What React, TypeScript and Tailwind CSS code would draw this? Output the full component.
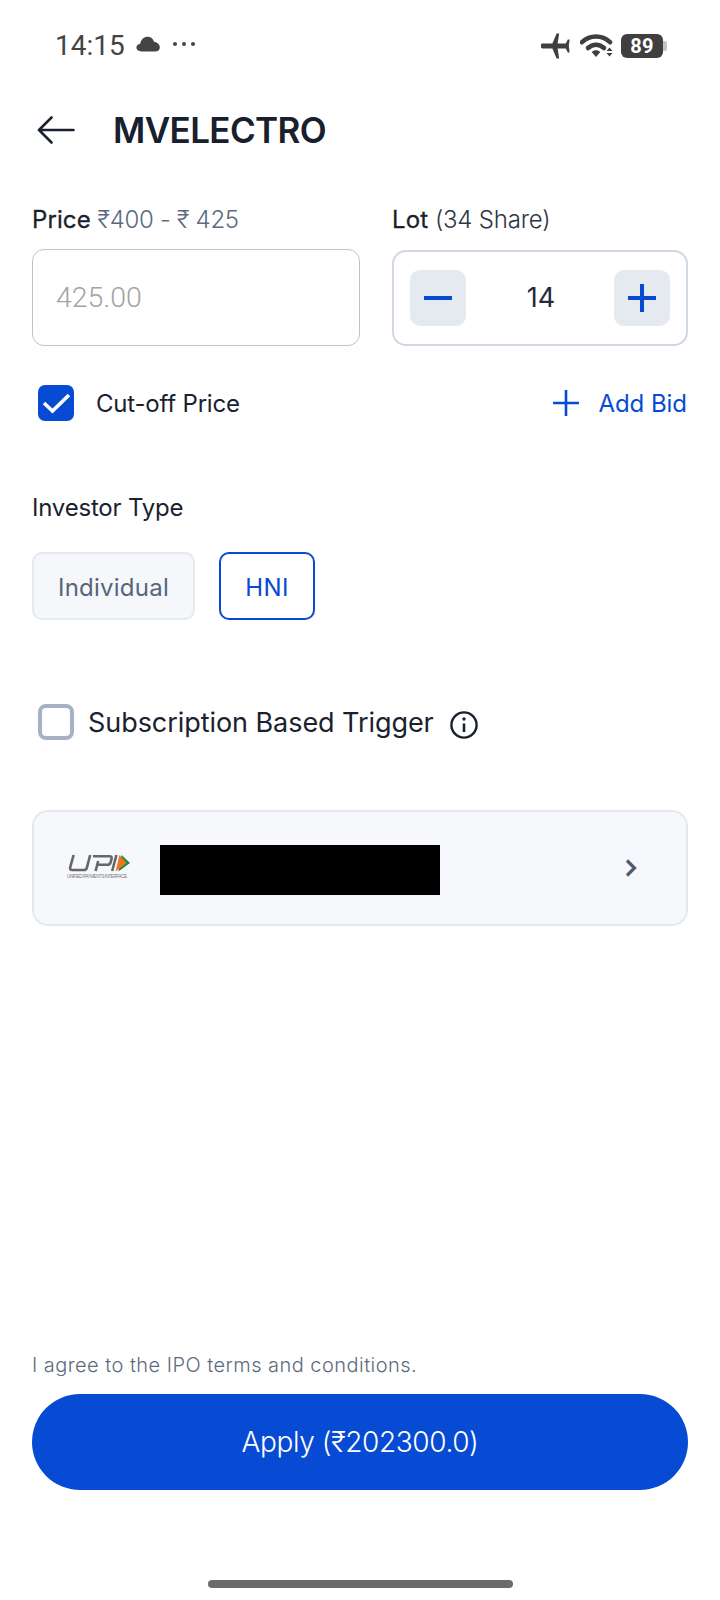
import React from "react";

const BLUE = "#074bd4";

function Plane() {
  return (
    <svg width="30" height="26" viewBox="0 0 30 26" fill="#3f3f3f">
      <path d="M0 12 C0 11 .8 10.6 1.6 10.6 L11.4 10.6 L15.6 .6 L18.2 .6 L16.6 10.6 L24.8 10.6 L26.8 6.6 L28.6 6.6 L27.8 13 L28.6 19.4 L26.8 19.4 L24.8 15.4 L16.6 15.4 L18.2 25.4 L15.6 25.4 L11.4 15.4 L1.6 15.4 C.8 15.4 0 15 0 14 Z" />
    </svg>
  );
}

function Wifi() {
  return (
    <svg width="34" height="25" viewBox="0 0 34 25" fill="none">
      <path d="M2 9.2 C10 1.6 22 1.6 30 9.2" stroke="#3f3f3f" strokeWidth="4.6" strokeLinecap="round" />
      <path d="M8 15 C12.6 10.7 19.4 10.7 24 15" stroke="#3f3f3f" strokeWidth="4.6" strokeLinecap="round" />
      <path d="M11.6 19 C14.4 16.7 17.6 16.7 20.4 19 L16 24 Z" fill="#3f3f3f" />
      <path d="M26.5 18 L29.5 14.6 L32.5 18 Z M26.5 20 L32.5 20 L29.5 23.6 Z" fill="#3f3f3f" />
    </svg>
  );
}

function Upi() {
  return (
    <svg width="64" height="25" viewBox="0 0 64 25" className="-mt-[4px] shrink-0">
      <g fill="none" stroke="#66676a" strokeWidth="2.6">
        <path d="M6.6 1 L3.2 13.4 Q2.5 16 5.2 16 H16.8 Q19.2 16 19.8 13.8 L23.2 1" />
        <path d="M26 2.3 H42.4 Q45.2 2.3 44.6 4.6 L43.6 8.4 Q43 10.8 40.4 10.8 H30.2 M31.2 7 L28.6 17" />
        <path d="M49.4 1 L45.2 17" />
      </g>
      <path d="M54.6 1 L63 9 L51.4 17.4 Z" fill="#1f8a45" />
      <path d="M52.4 1 L59.6 9 L48.6 17.4 Z" fill="#ee7623" />
      <text x="0" y="24" fontSize="4.6" fill="#77787b" fontFamily="'Liberation Sans', sans-serif" textLength="60">
        UNIFIED PAYMENTS INTERFACE
      </text>
    </svg>
  );
}

export default function App() {
  return (
    <div className="relative flex h-[1600px] w-[720px] flex-col overflow-hidden bg-white font-['Inter',sans-serif] text-[#1a2230]">
      {/* status bar */}
      <div className="mt-[33px] flex h-[25px] items-center justify-between pl-[55px] pr-[53px]">
        <div className="flex items-center">
          <span className="font-['Roboto',sans-serif] text-[28px] leading-none text-[#444444]">14:15</span>
          <svg width="24" height="16" viewBox="0 0 24 16" className="ml-[11px] -mt-[3px]" fill="#444444">
            <path d="M5.5 15.5 C2.4 15.5 .4 13.8 .4 11.6 C.4 9.6 2 8 4.2 7.8 C5 3.4 8.2 .8 11.6 .8 C14.6 .8 17 2.6 18 5.8 C21.4 6.2 23.8 8.6 23.8 11.4 C23.8 13.8 21.8 15.5 19 15.5 Z" />
          </svg>
          <span className="ml-[13px] -mt-[3px] flex gap-[5px]">
            <span className="h-[4px] w-[4px] rounded-full bg-[#444444]" />
            <span className="h-[4px] w-[4px] rounded-full bg-[#444444]" />
            <span className="h-[4px] w-[4px] rounded-full bg-[#444444]" />
          </span>
        </div>
        <div className="flex items-center">
          <Plane />
          <span className="ml-[9px]"><Wifi /></span>
          <span className="ml-[7px] flex items-center">
            <span className="flex h-[24px] w-[42px] items-center justify-center rounded-[6px] bg-[#3f3f3f] font-['Roboto',sans-serif] text-[20px] font-bold leading-none tracking-[0.3px] text-white">89</span>
            <span className="h-[10px] w-[4px] rounded-r-[2px] bg-[#c4c4c4]" />
          </span>
        </div>
      </div>

      {/* header */}
      <div className="mt-[46px] flex h-[52px] items-center pl-[37px]">
        <svg width="38" height="28" viewBox="0 0 38 28" fill="none" stroke="#1a2230" strokeWidth="2.6" strokeLinecap="round" strokeLinejoin="round">
          <path d="M36.5 14 H2 M14.5 1.5 L2 14 L14.5 26.5" />
        </svg>
        <h1 className="ml-[38px] text-[35px] font-semibold leading-none tracking-[-0.6px] text-[#17202c]">MVELECTRO</h1>
      </div>

      {/* price / lot */}
      <div className="mt-[48px] flex gap-[32px] px-[32px]">
        <div className="w-[328px]">
          <div className="text-[24px] leading-[32px] text-[#1a2230]">
            <span className="font-normal tracking-[0.1px] [-webkit-text-stroke:0.3px_#1a2230]">Price</span>{" "}
            <span className="font-light tracking-[-0.3px] text-[#5a6b7f]">₹400 - ₹ 425</span>
          </div>
          <div className="mt-[13px] flex h-[97px] items-center rounded-[12px] border-[1.5px] border-[#c2c2c2] pl-[23px] pt-[1px] font-['Roboto',sans-serif] text-[28.5px] font-light text-[#a3a3a3]">
            425.00
          </div>
        </div>
        <div className="w-[296px]">
          <div className="text-[24px] leading-[32px] text-[#1a2230]">
            <span className="font-normal tracking-[0.1px] [-webkit-text-stroke:0.3px_#1a2230]">Lot</span>{" "}
            <span className="font-light tracking-[-0.2px] text-[#2c3645]">(34 Share)</span>
          </div>
          <div className="mt-[14px] flex h-[96px] items-center justify-between rounded-[14px] border-2 border-[#cfd9e4] px-[16px]">
            <div className="flex h-[56px] w-[56px] items-center justify-center rounded-[10px] bg-[#e5e9f0]">
              <svg width="28" height="28" viewBox="0 0 28 28" stroke={BLUE} strokeWidth="4"><path d="M0 14 H28" /></svg>
            </div>
            <span className="-mt-[2px] ml-[2px] text-[27px] leading-none text-[#252c3a]">14</span>
            <div className="flex h-[56px] w-[56px] items-center justify-center rounded-[10px] bg-[#e5e9f0]">
              <svg width="28" height="28" viewBox="0 0 28 28" stroke={BLUE} strokeWidth="4"><path d="M0 14 H28 M14 0 V28" /></svg>
            </div>
          </div>
        </div>
      </div>

      {/* cut-off row */}
      <div className="mt-[38px] flex h-[38px] items-center justify-between pl-[38px] pr-[33px]">
        <div className="flex items-center">
          <div className="flex h-[36px] w-[36px] items-center justify-center rounded-[7px] bg-[#074bd4]">
            <svg width="36" height="36" viewBox="0 0 36 36" fill="none" stroke="white" strokeWidth="3.6">
              <path d="M6 18 L14.5 26 L31 10" />
            </svg>
          </div>
          <span className="ml-[22px] pt-[2px] text-[24px] leading-none tracking-[-0.2px]">Cut-off Price</span>
        </div>
        <div className="flex items-center text-[#074bd4]">
          <svg width="28" height="28" viewBox="0 0 28 28" stroke={BLUE} strokeWidth="2.6"><path d="M1 14 H27 M14 1 V27" /></svg>
          <span className="ml-[18px] pt-[2px] text-[24px] leading-none tracking-[-0.05px]">Add Bid</span>
        </div>
      </div>

      {/* investor type */}
      <div className="mt-[70px] px-[32px] text-[24px] leading-[32px] tracking-[-0.2px]">Investor Type</div>
      <div className="mt-[28px] flex gap-[24px] px-[32px] text-[24px] leading-none">
        <div className="flex h-[68px] w-[163px] items-center justify-center rounded-[10px] border-2 border-[#e5eaf0] bg-[#f5f7fb] pt-[3px] tracking-[0.25px] text-[#55657a]">Individual</div>
        <div className="flex h-[68px] w-[96px] items-center justify-center rounded-[10px] border-2 border-[#074bd4] pt-[3px] tracking-[0.4px] text-[#074bd4]">HNI</div>
      </div>

      {/* trigger */}
      <div className="mt-[84px] flex h-[36px] items-center pl-[38px]">
        <div className="h-[36px] w-[36px] rounded-[8px] border-[4px] border-[#a5b2c3]" />
        <span className="ml-[14px] text-[27px] leading-none tracking-[-0.06px]">Subscription Based Trigger</span>
        <svg width="28" height="28" viewBox="0 0 28 28" fill="none" stroke="#17202c" strokeWidth="2.4" className="ml-[16px] mt-[6px]">
          <circle cx="14" cy="14" r="12.6" />
          <path d="M14 12.5 V21" strokeWidth="2.6" />
          <circle cx="14" cy="8" r="1.7" fill="#17202c" stroke="none" />
        </svg>
      </div>

      {/* upi card */}
      <div className="mx-[32px] mt-[70px] flex h-[116px] items-center rounded-[16px] border-2 border-[#e4e9f0] bg-[#f6f8fc] pl-[33px] pr-[49px]">
        <Upi />
        <div className="ml-[29px] mt-[4px] h-[50px] w-[280px] bg-black" />
        <svg width="12" height="20" viewBox="0 0 12 20" fill="none" stroke="#4f5d6e" strokeWidth="3.2" className="ml-auto">
          <path d="M2 2.5 L9.5 10 L2 17.5" />
        </svg>
      </div>

      {/* footer */}
      <div className="mt-auto px-[32px]">
        <p className="text-[20px] font-light leading-[28px] tracking-[0.46px] text-[#5d6b7c]">I agree to the IPO terms and conditions.</p>
        <div className="mt-[15px] flex h-[96px] items-center justify-center rounded-full bg-[#074bd4] text-[28px] font-light leading-none tracking-[-0.4px] text-white">
          Apply (₹202300.0)
        </div>
      </div>
      <div className="mb-[12px] mt-[90px] flex justify-center">
        <div className="h-[8px] w-[305px] rounded-full bg-[#6b6b6b]" />
      </div>
    </div>
  );
}
